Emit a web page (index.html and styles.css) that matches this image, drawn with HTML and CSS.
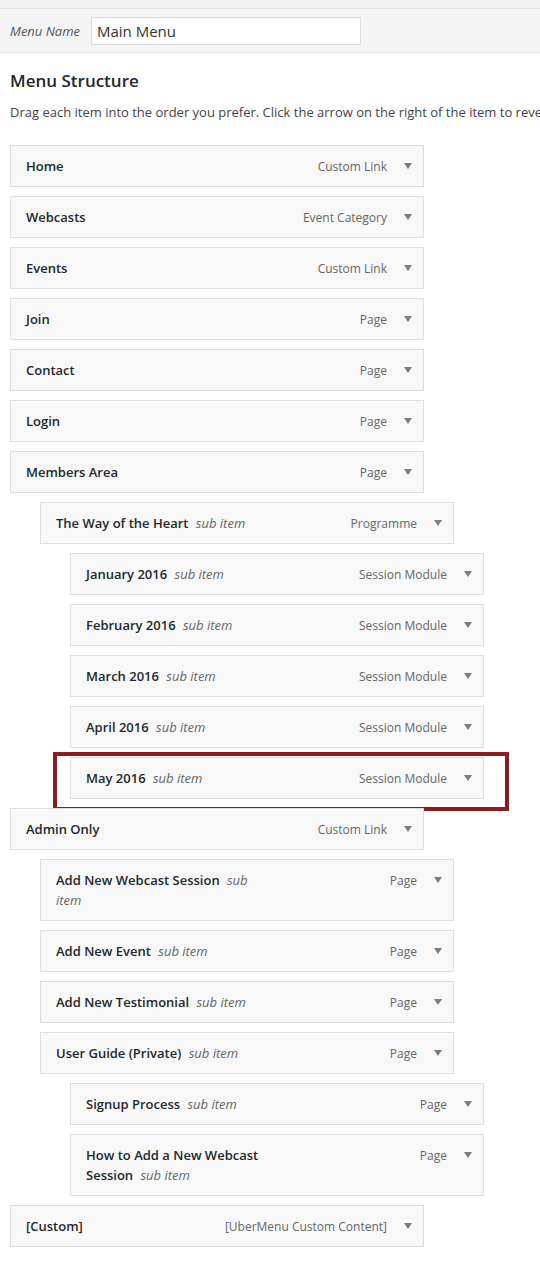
FILE: index.html
```html
<!DOCTYPE html>
<html>
<head>
<meta charset="utf-8">
<title>Menus</title>
<link rel="stylesheet" href="styles.css">
</head>
<body>
<div class="topstrip"></div>
<div class="header">
  <label class="name-label">Menu Name</label>
  <div class="name-input">Main Menu</div>
</div>
<div class="structure">
  <h3>Menu Structure</h3>
  <p class="desc">Drag each item into the order you prefer. Click the arrow on the right of the item to reveal additional configuration options.</p>
  <ul class="menu">
    <li class="item"><span class="title">Home</span><span class="type">Custom Link</span><span class="arrow"></span></li>
    <li class="item"><span class="title">Webcasts</span><span class="type">Event Category</span><span class="arrow"></span></li>
    <li class="item"><span class="title">Events</span><span class="type">Custom Link</span><span class="arrow"></span></li>
    <li class="item"><span class="title">Join</span><span class="type">Page</span><span class="arrow"></span></li>
    <li class="item"><span class="title">Contact</span><span class="type">Page</span><span class="arrow"></span></li>
    <li class="item"><span class="title">Login</span><span class="type">Page</span><span class="arrow"></span></li>
    <li class="item"><span class="title">Members Area</span><span class="type">Page</span><span class="arrow"></span></li>
    <li class="item d1"><span class="title">The Way of the Heart <span class="sub">sub item</span></span><span class="type">Programme</span><span class="arrow"></span></li>
    <li class="item d2"><span class="title">January 2016 <span class="sub">sub item</span></span><span class="type">Session Module</span><span class="arrow"></span></li>
    <li class="item d2"><span class="title">February 2016 <span class="sub">sub item</span></span><span class="type">Session Module</span><span class="arrow"></span></li>
    <li class="item d2"><span class="title">March 2016 <span class="sub">sub item</span></span><span class="type">Session Module</span><span class="arrow"></span></li>
    <li class="item d2"><span class="title">April 2016 <span class="sub">sub item</span></span><span class="type">Session Module</span><span class="arrow"></span></li>
    <li class="item d2 marked"><span class="title">May 2016 <span class="sub">sub item</span></span><span class="type">Session Module</span><span class="arrow"></span><span class="highlight"></span></li>
    <li class="item"><span class="title">Admin Only</span><span class="type">Custom Link</span><span class="arrow"></span></li>
    <li class="item d1"><span class="title">Add New Webcast Session <span class="sub">sub item</span></span><span class="type">Page</span><span class="arrow"></span></li>
    <li class="item d1"><span class="title">Add New Event <span class="sub">sub item</span></span><span class="type">Page</span><span class="arrow"></span></li>
    <li class="item d1"><span class="title">Add New Testimonial <span class="sub">sub item</span></span><span class="type">Page</span><span class="arrow"></span></li>
    <li class="item d1"><span class="title">User Guide (Private) <span class="sub">sub item</span></span><span class="type">Page</span><span class="arrow"></span></li>
    <li class="item d2"><span class="title">Signup Process <span class="sub">sub item</span></span><span class="type">Page</span><span class="arrow"></span></li>
    <li class="item d2"><span class="title">How to Add a New Webcast Session <span class="sub">sub item</span></span><span class="type">Page</span><span class="arrow"></span></li>
    <li class="item"><span class="title">[Custom]</span><span class="type">[UberMenu Custom Content]</span><span class="arrow"></span></li>
  </ul>
</div>
</body>
</html>
```
FILE: styles.css
```css
html, body {
  margin: 0;
  padding: 0;
  background: #ffffff;
  overflow: hidden;
}
body {
  font-family: "Open Sans", "Noto Sans", sans-serif;
  font-size: 13px;
  color: #444444;
}
.topstrip {
  height: 8px;
  background: #f1f1f1;
  border-bottom: 1px solid #e3e3e3;
}
.header {
  height: 43px;
  background: #f4f4f4;
  border-bottom: 1px solid #e3e3e3;
  display: flex;
  align-items: center;
  padding-left: 10px;
}
.name-label {
  font-style: italic;
  font-size: 13px;
  color: #555555;
  width: 81px;
}
.name-input {
  box-sizing: border-box;
  width: 270px;
  height: 28px;
  background: #ffffff;
  border: 1px solid #dddddd;
  font-size: 15px;
  line-height: 26px;
  padding-left: 5px;
  color: #333333;
}
.structure {
  padding: 0 10px;
}
h3 {
  margin: 16px 0 0;
  font-size: 17px;
  line-height: 23px;
  font-weight: 600;
  color: #23282d;
}
.desc {
  margin: 10px 0 0;
  line-height: 20px;
  white-space: nowrap;
  color: #444444;
}
.menu {
  list-style: none;
  margin: 0;
  padding: 14px 0 0;
}
.item {
  position: relative;
  box-sizing: border-box;
  width: 414px;
  margin-top: 9px;
  display: flex;
  align-items: flex-start;
  padding: 10px 11px 10px 15px;
  border: 1px solid #dfdfdf;
  background: #f8f8f8;
  line-height: 20px;
}
.item.d1 {
  margin-left: 30px;
}
.item.d2 {
  margin-left: 60px;
}
.title {
  flex: 1 1 auto;
  max-width: 213px;
  font-weight: 600;
  color: #23282d;
}
.sub {
  font-weight: 400;
  font-style: italic;
  color: #666666;
  margin-left: 4px;
}
.type {
  margin-left: auto;
  padding-top: 1px;
  line-height: 19px;
  font-size: 12px;
  color: #666666;
  white-space: nowrap;
}
.arrow {
  flex: none;
  width: 0;
  height: 0;
  margin: 7px 0 0 17px;
  border-left: 4px solid transparent;
  border-right: 4px solid transparent;
  border-top: 6px solid #7d7d7d;
}
.highlight {
  position: absolute;
  left: -18px;
  top: -6px;
  width: 456px;
  height: 59px;
  box-sizing: border-box;
  border: 4px solid #8b1c23;
  pointer-events: none;
}
```
